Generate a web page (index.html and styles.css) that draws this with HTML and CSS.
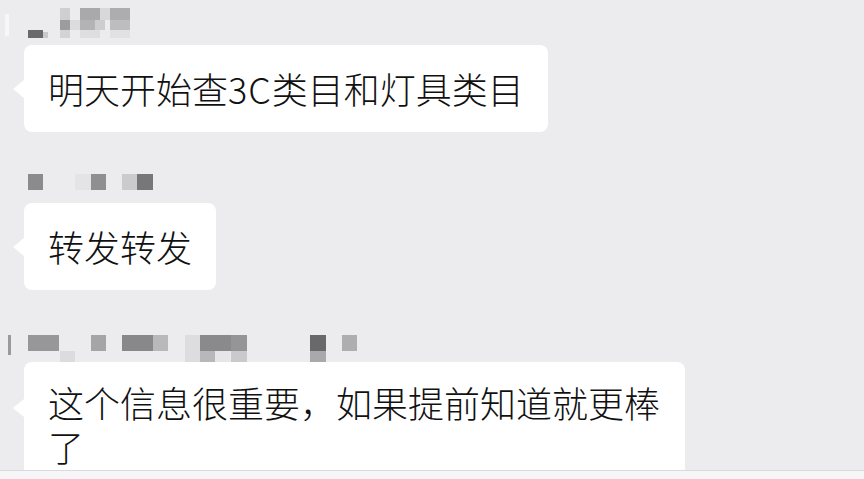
FILE: index.html
```html
<!DOCTYPE html>
<html lang="zh-CN">
<head>
    <meta charset="UTF-8">
    <title>聊天记录</title>
    <link rel="stylesheet" href="styles.css">
</head>
<body>
    <div class="chat">
        <div class="msg first">
            <svg class="name" width="160" height="40" viewBox="0 0 160 40">
                <rect x="5" y="14" width="4" height="22" fill="#f7f7f8"/>
                <rect x="60" y="8" width="10" height="12" fill="#cfcfd1"/>
                <rect x="80" y="8" width="20" height="12" fill="#a9a9ab"/>
                <rect x="100" y="8" width="10" height="12" fill="#d8d8da"/>
                <rect x="110" y="8" width="20" height="12" fill="#adadaf"/>
                <rect x="60" y="20" width="10" height="10" fill="#9c9c9e"/>
                <rect x="70" y="20" width="10" height="10" fill="#dcdcde"/>
                <rect x="80" y="20" width="15" height="10" fill="#b3b3b5"/>
                <rect x="95" y="20" width="10" height="10" fill="#cdcdcf"/>
                <rect x="110" y="20" width="20" height="10" fill="#bdbdbf"/>
                <rect x="60" y="30" width="10" height="8" fill="#d3d3d5"/>
                <rect x="80" y="30" width="20" height="8" fill="#dedee0"/>
                <rect x="110" y="30" width="20" height="8" fill="#e1e1e3"/>
                <rect x="28" y="30" width="15" height="8" fill="#69696b"/>
                <rect x="43" y="32" width="5" height="6" fill="#c9c9cb"/>
            </svg>
            <div class="bubble">明天开始查<span class="latin">3C</span>类目和灯具类目</div>
        </div>

        <div class="msg">
            <svg class="name" width="160" height="34" viewBox="0 0 160 34">
                <rect x="28" y="10" width="15" height="16" fill="#8b8b8d"/>
                <rect x="75" y="10" width="16" height="16" fill="#e4e4e6"/>
                <rect x="91" y="10" width="15" height="16" fill="#8f8f91"/>
                <rect x="122" y="10" width="15" height="16" fill="#cbcbcd"/>
                <rect x="137" y="10" width="16" height="16" fill="#777779"/>
            </svg>
            <div class="bubble">转发转发</div>
        </div>

        <div class="msg">
            <svg class="name" width="380" height="40" viewBox="0 0 380 40">
                <rect x="8" y="13" width="3" height="20" fill="#9a9a9c"/>
                <rect x="28" y="13" width="31" height="16" fill="#979799"/>
                <rect x="60" y="29" width="15" height="11" fill="#dcdcde"/>
                <rect x="91" y="13" width="15" height="16" fill="#a5a5a7"/>
                <rect x="122" y="13" width="31" height="16" fill="#88888a"/>
                <rect x="153" y="13" width="15" height="16" fill="#b9b9bb"/>
                <rect x="185" y="13" width="15" height="27" fill="#dddddf"/>
                <rect x="200" y="13" width="31" height="16" fill="#8a8a8c"/>
                <rect x="231" y="13" width="16" height="16" fill="#959597"/>
                <rect x="200" y="29" width="15" height="11" fill="#b8b8ba"/>
                <rect x="215" y="29" width="15" height="11" fill="#e6e6e8"/>
                <rect x="231" y="29" width="16" height="11" fill="#cacacc"/>
                <rect x="310" y="13" width="16" height="16" fill="#69696b"/>
                <rect x="310" y="29" width="16" height="11" fill="#a9a9ab"/>
                <rect x="342" y="13" width="15" height="16" fill="#aeaeb0"/>
            </svg>
            <div class="bubble">这个信息很重要，如果提前知道就更棒了</div>
        </div>
    </div>
    <div class="input-bar"></div>
</body>
</html>
```

FILE: styles.css
```css
body {
    margin: 0;
    padding: 0;
    background-color: #ececee;
    font-family: "Noto Sans CJK SC", "Noto Sans", sans-serif;
    color: #111;
    overflow: hidden;
    height: 479px;
}
.chat {
    display: flex;
    flex-direction: column;
    align-items: flex-start;
}
.msg {
    display: flex;
    flex-direction: column;
    align-items: flex-start;
    margin-top: 32px;
}
.msg.first {
    margin-top: 0;
}
.name {
    display: block;
}
.bubble {
    position: relative;
    margin-top: 5px;
    margin-left: 24px;
    background-color: #fff;
    border-radius: 8px;
    padding: 21px 24px 22px;
    font-size: 36px;
    font-weight: 300;
    line-height: 44px;
    max-width: 613px;
}
.latin {
    letter-spacing: 1px;
}
.msg:last-child .bubble {
    margin-top: 0;
    padding-top: 18px;
}
.bubble::before {
    content: "";
    position: absolute;
    left: -11px;
    top: 35px;
    border-style: solid;
    border-width: 9px 11px 9px 0;
    border-color: transparent #fff transparent transparent;
}
.msg:last-child .bubble::before {
    top: 37px;
}
.input-bar {
    position: fixed;
    left: 0;
    right: 0;
    bottom: 0;
    height: 8px;
    background-color: #f6f6f8;
    border-top: 1px solid #dadadc;
}
```
